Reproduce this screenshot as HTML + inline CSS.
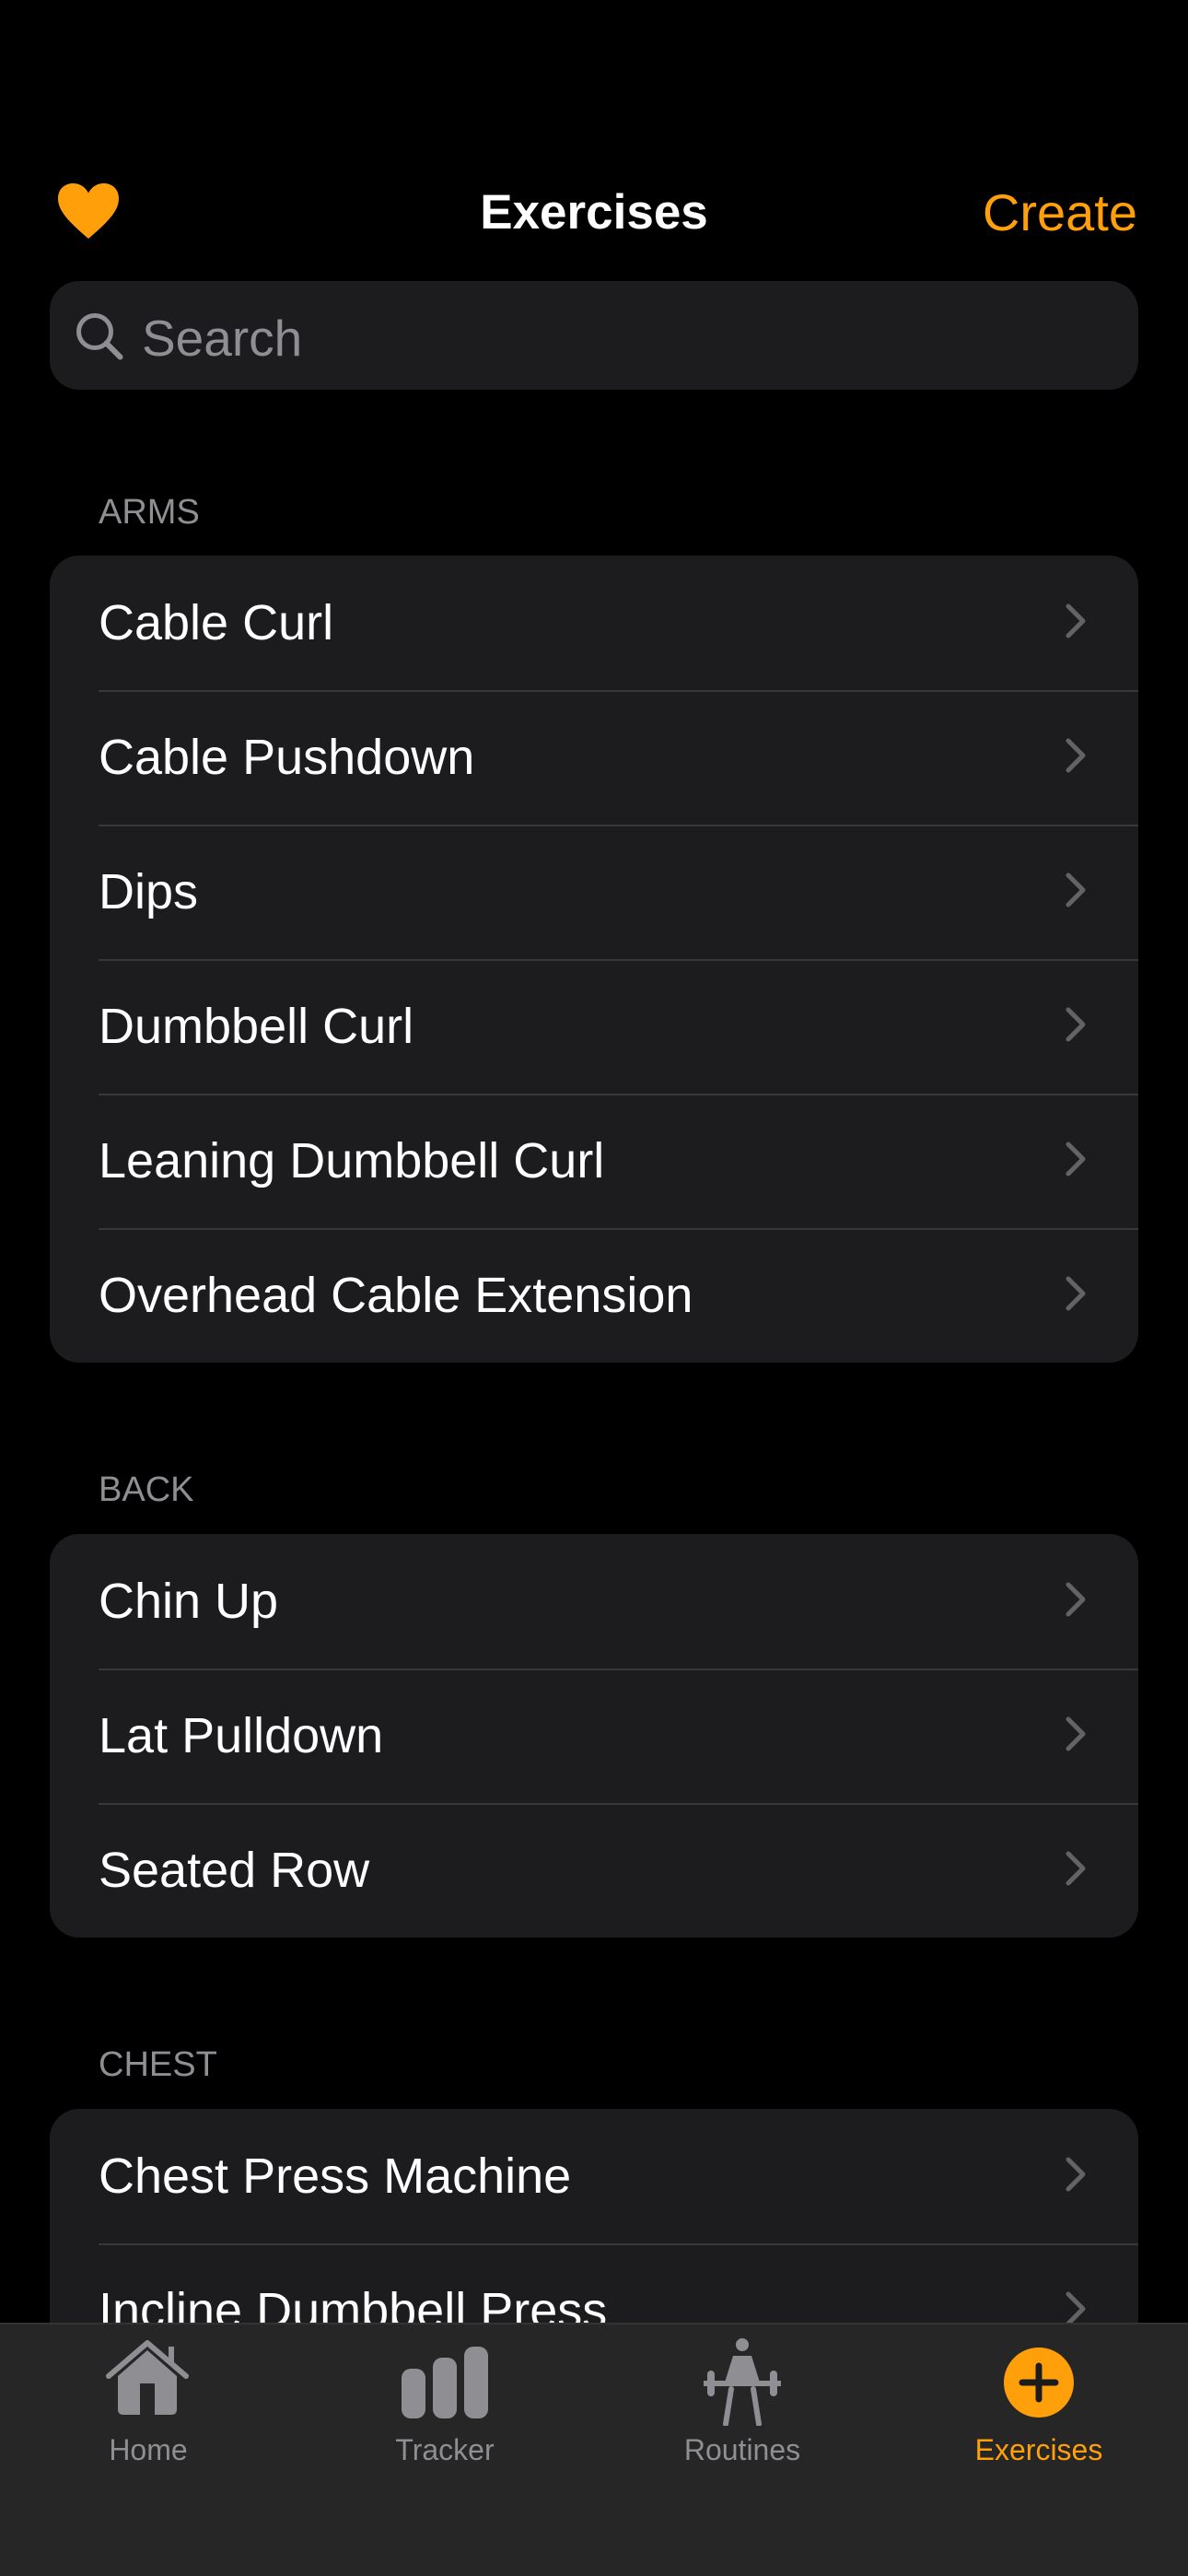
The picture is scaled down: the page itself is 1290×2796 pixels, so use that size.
<!DOCTYPE html>
<html><head><meta charset="utf-8"><style>
*{margin:0;padding:0;box-sizing:border-box}
body{width:1290px;height:2796px;background:#000;font-family:"Liberation Sans",sans-serif;color:#fff;position:relative;overflow:hidden}
.abs{position:absolute}
.title{left:0;width:1290px;text-align:center;top:200px;font-size:53px;font-weight:bold}
.create{right:55px;top:198px;font-size:56px;color:#ff9f0a}
.search{left:54px;top:305px;width:1182px;height:118px;background:#1c1c1e;border-radius:32px}
.search span{position:absolute;left:100px;top:30px;font-size:55px;color:#8e8e93}
.lbl{left:107px;font-size:38px;color:#8e8e93}
.card{left:54px;width:1182px;background:#1c1c1e;border-radius:32px;overflow:hidden}
.row{height:146px;position:relative;font-size:54px;line-height:146px;padding-left:53px}
.row+.row:before{content:"";position:absolute;left:53px;right:0;top:0;height:2px;background:#38383a}
.row svg{position:absolute;right:54px;top:51px}
.tab{left:0;top:2521px;width:1290px;height:275px;background:#262626;border-top:2px solid #333}
.t{position:absolute;top:118px;width:240px;margin-left:-120px;text-align:center;font-size:32px;color:#8e8e93}
</style></head><body>
<svg class="abs" style="left:60px;top:196px" width="72" height="66" viewBox="0 0 24 22"><path d="M12 21 C5 15 1 11 1 6.5 C1 3 3.5 1 6.5 1 C9 1 11 2.5 12 4.5 C13 2.5 15 1 17.5 1 C20.5 1 23 3 23 6.5 C23 11 19 15 12 21Z" fill="#ff9f0a"/></svg>
<div class="abs title">Exercises</div>
<div class="abs create">Create</div>
<div class="abs search"><svg class="abs" style="left:24px;top:30px" width="60" height="60" viewBox="0 0 24 24"><circle cx="10" cy="10" r="7" fill="none" stroke="#8e8e93" stroke-width="2"/><path d="M15 15 L21 21" stroke="#8e8e93" stroke-width="2.4" stroke-linecap="round"/></svg><span>Search</span></div>

<div class="abs lbl" style="top:535px">ARMS</div>
<div class="abs card" style="top:603px">
<div class="row">Cable Curl<svg width="26" height="40" viewBox="0 0 13 20"><path d="M2 2 L10 10 L2 18" fill="none" stroke="#636366" stroke-width="2.5" stroke-linecap="round" stroke-linejoin="round"/></svg></div>
<div class="row">Cable Pushdown<svg width="26" height="40" viewBox="0 0 13 20"><path d="M2 2 L10 10 L2 18" fill="none" stroke="#636366" stroke-width="2.5" stroke-linecap="round" stroke-linejoin="round"/></svg></div>
<div class="row">Dips<svg width="26" height="40" viewBox="0 0 13 20"><path d="M2 2 L10 10 L2 18" fill="none" stroke="#636366" stroke-width="2.5" stroke-linecap="round" stroke-linejoin="round"/></svg></div>
<div class="row">Dumbbell Curl<svg width="26" height="40" viewBox="0 0 13 20"><path d="M2 2 L10 10 L2 18" fill="none" stroke="#636366" stroke-width="2.5" stroke-linecap="round" stroke-linejoin="round"/></svg></div>
<div class="row">Leaning Dumbbell Curl<svg width="26" height="40" viewBox="0 0 13 20"><path d="M2 2 L10 10 L2 18" fill="none" stroke="#636366" stroke-width="2.5" stroke-linecap="round" stroke-linejoin="round"/></svg></div>
<div class="row">Overhead Cable Extension<svg width="26" height="40" viewBox="0 0 13 20"><path d="M2 2 L10 10 L2 18" fill="none" stroke="#636366" stroke-width="2.5" stroke-linecap="round" stroke-linejoin="round"/></svg></div>
</div>

<div class="abs lbl" style="top:1596px">BACK</div>
<div class="abs card" style="top:1665px">
<div class="row">Chin Up<svg width="26" height="40" viewBox="0 0 13 20"><path d="M2 2 L10 10 L2 18" fill="none" stroke="#636366" stroke-width="2.5" stroke-linecap="round" stroke-linejoin="round"/></svg></div>
<div class="row">Lat Pulldown<svg width="26" height="40" viewBox="0 0 13 20"><path d="M2 2 L10 10 L2 18" fill="none" stroke="#636366" stroke-width="2.5" stroke-linecap="round" stroke-linejoin="round"/></svg></div>
<div class="row">Seated Row<svg width="26" height="40" viewBox="0 0 13 20"><path d="M2 2 L10 10 L2 18" fill="none" stroke="#636366" stroke-width="2.5" stroke-linecap="round" stroke-linejoin="round"/></svg></div>
</div>

<div class="abs lbl" style="top:2220px">CHEST</div>
<div class="abs card" style="top:2289px">
<div class="row">Chest Press Machine<svg width="26" height="40" viewBox="0 0 13 20"><path d="M2 2 L10 10 L2 18" fill="none" stroke="#636366" stroke-width="2.5" stroke-linecap="round" stroke-linejoin="round"/></svg></div>
<div class="row">Incline Dumbbell Press<svg width="26" height="40" viewBox="0 0 13 20"><path d="M2 2 L10 10 L2 18" fill="none" stroke="#636366" stroke-width="2.5" stroke-linecap="round" stroke-linejoin="round"/></svg></div>
</div>

<div class="abs tab">
<svg class="abs" style="left:114px;top:16px" width="92" height="84" viewBox="0 0 46 42"><path d="M2 20 L23 2 L44 20" fill="none" stroke="#8e8e93" stroke-width="3" stroke-linecap="round" stroke-linejoin="round"/><path d="M36 4 V13" stroke="#8e8e93" stroke-width="3"/><path d="M7 20 L23 6 L39 20 V38 Q39 41 36 41 H10 Q7 41 7 38Z" fill="#8e8e93"/><rect x="19" y="24" width="8" height="17" fill="#262626"/></svg>
<svg class="abs" style="left:434px;top:24px" width="98" height="78" viewBox="0 0 49 39"><rect x="1" y="12" width="13" height="27" rx="5" fill="#8e8e93"/><rect x="18" y="6" width="13" height="33" rx="5" fill="#8e8e93"/><rect x="35" y="0" width="13" height="39" rx="5" fill="#8e8e93"/></svg>
<svg class="abs" style="left:760px;top:14px" width="92" height="96" viewBox="0 0 46 48"><circle cx="23" cy="4" r="3.5" fill="#8e8e93"/><path d="M18 10 H28 L33 26 H13Z" fill="#8e8e93"/><path d="M17 28 L14 47 M29 28 L32 47" stroke="#8e8e93" stroke-width="3" stroke-linecap="round"/><path d="M2 25 H44" stroke="#8e8e93" stroke-width="3"/><rect x="4" y="18" width="4" height="14" rx="2" fill="#8e8e93"/><rect x="38" y="18" width="4" height="14" rx="2" fill="#8e8e93"/></svg>
<svg class="abs" style="left:1090px;top:24px" width="76" height="78" viewBox="0 0 38 38"><circle cx="19" cy="19" r="19" fill="#ff9f0a"/><path d="M19 10 V28 M10 19 H28" stroke="#1c1c1e" stroke-width="3.5" stroke-linecap="round"/></svg>
<div class="t" style="left:161px">Home</div>
<div class="t" style="left:483px">Tracker</div>
<div class="t" style="left:806px">Routines</div>
<div class="t" style="left:1128px;color:#ff9f0a">Exercises</div>
</div>
</body></html>
